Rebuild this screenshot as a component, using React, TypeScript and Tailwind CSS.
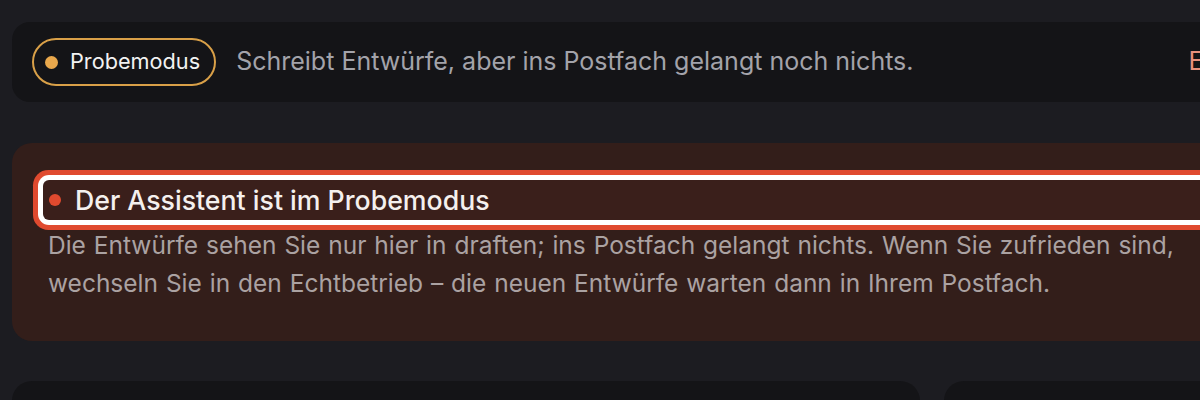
import React from "react";

export default function App() {
  return (
    <div
      className="w-[1200px] h-[400px] overflow-hidden bg-[#1c1c21]"
      style={{ fontFamily: "Inter, 'Noto Sans', sans-serif" }}
    >
      <div className="w-[1500px] pl-[12px] pt-[22px] flex flex-col">
        {/* top status card */}
        <div className="h-[80px] rounded-[18px] bg-[#141417] flex items-center pl-[20px] pr-[24px]">
          <div className="h-[48px] rounded-full border-2 border-[#d9a048] flex items-center pl-[11px] pr-[14px] gap-[12px]">
            <span className="w-[13px] h-[13px] rounded-full bg-[#e9a84c]" />
            <span className="text-[21.7px] text-[#f2f2f2] leading-none">Probemodus</span>
          </div>
          <span className="ml-[20px] text-[25px] text-[#a3a3aa] whitespace-nowrap">
            Schreibt Entwürfe, aber ins Postfach gelangt noch nichts.
          </span>
          <span className="ml-[275px] text-[25px] text-[#ea917c] whitespace-nowrap">Echtbetrieb starten</span>
        </div>

        {/* warning card */}
        <div className="mt-[41px] rounded-[20px] bg-[#331e1a] pl-[36px] pt-[37px] pb-[39px] pr-[36px]">
          <div className="ml-[-5px] w-[1430px] h-[40px] rounded-[6px] bg-[#3a1f1b] flex items-center pl-[6px] gap-[14px] shadow-[0_0_0_5px_#ffffff,0_0_0_10px_#e04a2f]">
            <span className="w-[12px] h-[12px] rounded-full bg-[#e04a2f]" />
            <span className="text-[26.7px] font-medium text-[#f4f0ee] leading-none">
              Der Assistent ist im Probemodus
            </span>
          </div>
          <p className="mt-[6px] w-[1140px] text-[24.5px] leading-[38px] text-[#aba2a2] [word-spacing:1px]">
            Die Entwürfe sehen Sie nur hier in draften; ins Postfach gelangt nichts. Wenn Sie zufrieden sind, wechseln Sie in den Echtbetrieb – die neuen Entwürfe warten dann in Ihrem Postfach.
          </p>
        </div>

        {/* bottom cards */}
        <div className="mt-[40px] flex gap-[24px]">
          <div className="w-[908px] h-[200px] rounded-[20px] bg-[#141417]" />
          <div className="w-[520px] h-[200px] rounded-[20px] bg-[#141417]" />
        </div>
      </div>
    </div>
  );
}
